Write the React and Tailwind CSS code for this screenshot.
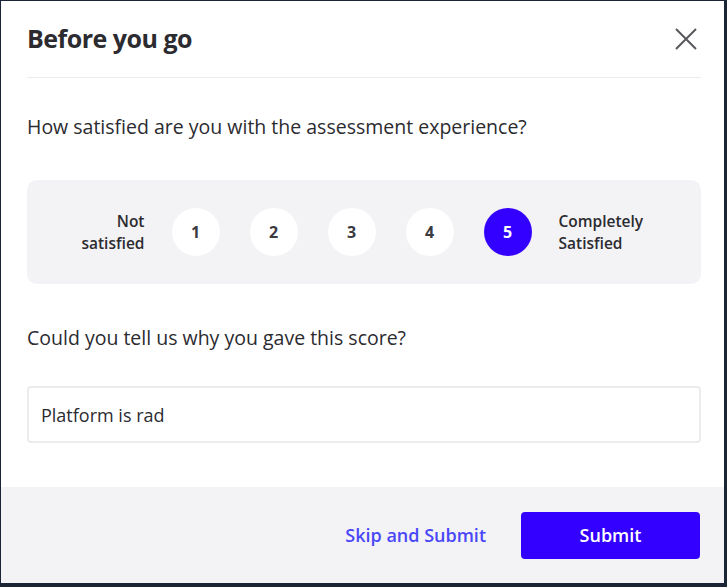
import React, { useState } from "react";

const scores = [1, 2, 3, 4, 5];

const App = () => {
  const [score, setScore] = useState(5);
  const [reason, setReason] = useState("Platform is rad");

  return (
    <div className="w-[727px] h-[587px] bg-[#1c2536] pl-px pt-px pr-[3px] pb-[4px] font-['Open_Sans',sans-serif]">
      <div className="w-full h-full bg-white flex flex-col overflow-hidden">
        <div className="pl-[26px] pr-[23px] flex-1">
          {/* header */}
          <div className="flex items-center justify-between h-[77px] border-b border-[#ececef]">
            <h1 className="text-[25px] font-bold text-[#2b2b30] tracking-[-0.5px]">Before you go</h1>
            <button className="mr-[4px] text-[#58585d]">
              <svg width="22" height="22" viewBox="0 0 22 22" fill="none" stroke="currentColor" strokeWidth="2">
                <path d="M1 1L21 21M21 1L1 21" />
              </svg>
            </button>
          </div>

          <p className="mt-[35px] text-[19.5px] leading-[28px] text-[#2b2b30]">How satisfied are you with the assessment experience?</p>

          {/* rating */}
          <div className="mt-[39px] h-[104px] rounded-[10px] bg-[#f3f3f6] flex items-center justify-center pr-[3px]">
            <div className="w-[66px] text-right text-[15.5px] font-semibold leading-[22px] text-[#2b2b30]">Not satisfied</div>
            <div className="flex gap-[30px] mx-[27px]">
              {scores.map((n) => (
                <button
                  key={n}
                  onClick={() => setScore(n)}
                  className={
                    n === score
                      ? "w-[48px] h-[48px] rounded-full bg-[#3300ff] text-white text-[16px] font-bold flex items-center justify-center"
                      : "w-[48px] h-[48px] rounded-full bg-white text-[#3a3a3f] text-[16px] font-bold flex items-center justify-center"
                  }
                >
                  {n}
                </button>
              ))}
            </div>
            <div className="w-[88px] text-[15.5px] font-semibold leading-[22px] text-[#2b2b30]">Completely Satisfied</div>
          </div>

          <p className="mt-[40px] text-[19.5px] leading-[28px] text-[#2b2b30]">Could you tell us why you gave this score?</p>

          <input
            value={reason}
            onChange={(e) => setReason(e.target.value)}
            className="mt-[34px] w-full h-[57px] border-2 border-[#ececef] rounded-[4px] px-[12px] text-[18px] font-medium text-[#2b2b30] outline-none"
          />
        </div>

        {/* footer */}
        <div className="h-[96px] bg-[#f3f3f6] flex items-center justify-end gap-[35px] px-[24px]">
          <button className="text-[18px] font-semibold text-[#4a47f8]">Skip and Submit</button>
          <button className="w-[179px] h-[47px] rounded-[4px] bg-[#3300ff] text-white text-[18px] font-semibold">Submit</button>
        </div>
      </div>
    </div>
  );
};

export default App;
